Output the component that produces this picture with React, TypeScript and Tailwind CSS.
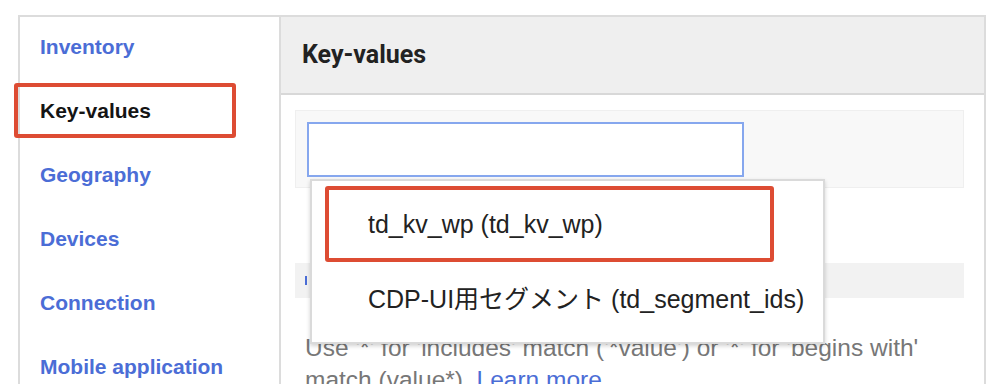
import type { FC } from "react"

const navItems = [
    { label: "Inventory", active: false },
    { label: "Key-values", active: true },
    { label: "Geography", active: false },
    { label: "Devices", active: false },
    { label: "Connection", active: false },
    { label: "Mobile application", active: false },
]

const NavItem: FC<{ label: string; active: boolean }> = ({ label, active }) => {
    return (
        <div className="relative flex h-[64px] items-center pl-[20px]">
            <span
                className={
                    active
                        ? "text-[21px] font-bold text-[#141414]"
                        : "text-[21px] font-bold text-[#4b6dd6]"
                }
            >
                {label}
            </span>
            {active && (
                <div className="absolute left-[-6px] top-[4px] h-[55px] w-[222px] rounded-[3px] border-[4px] border-[#dd4c33]" />
            )}
        </div>
    )
}

const Dropdown = () => {
    return (
        <div className="absolute left-[14px] top-[68px] z-10 h-[165px] w-[515px] border-2 border-[#dadada] bg-white shadow-[0_2px_4px_rgba(0,0,0,0.18)]">
            <div className="relative flex h-[84px] items-center pl-[56px] pt-[4px] text-[25px] text-[#222]">
                td_kv_wp (td_kv_wp)
                <div className="absolute left-[13px] top-[5px] h-[76px] w-[449px] rounded-[3px] border-[4px] border-[#dd4c33]" />
            </div>
            <div className="flex h-[72px] items-center pl-[56px] pb-[2px] text-[25px] text-[#222]">
                CDP-UI用セグメント (td_segment_ids)
            </div>
        </div>
    )
}

export default function App() {
    return (
        <div
            className="h-[384px] w-[990px] overflow-hidden bg-white pl-[18px] pt-[15px]"
            style={{ fontFamily: '"Liberation Sans", "Noto Sans CJK JP", Arial, sans-serif' }}
        >
            <div className="flex h-[400px] w-[968px] border-l-2 border-r-2 border-t-2 border-[#dcdcdc]">
                {/* left nav */}
                <div className="flex w-[261px] shrink-0 flex-col border-r-2 border-[#dcdcdc]">
                    <div className="-mt-[2px] flex flex-col">
                        {navItems.map((item) => (
                            <NavItem key={item.label} label={item.label} active={item.active} />
                        ))}
                    </div>
                </div>

                {/* right panel */}
                <div className="flex flex-1 flex-col">
                    <div className="flex h-[78px] items-center border-b-2 border-[#d8d8d8] bg-[#efefef] pl-[21px]">
                        <span
                            className="text-[25px] font-bold text-[#222]"
                            style={{ fontFamily: "Roboto, Arial, sans-serif" }}
                        >
                            Key-values
                        </span>
                    </div>

                    <div className="flex flex-col pl-[14px] pr-[20px]">
                        <div className="relative mt-[15px] h-[78px] border border-[#efefef] bg-[#f8f8f8] pl-[11px] pt-[11px]">
                            <div className="h-[55px] w-[437px] border-2 border-[#86a7ee] bg-white" />
                            <Dropdown />
                        </div>

                        <div className="mt-[75px] flex h-[35px] items-center bg-[#f2f2f2] pl-[10px]">
                            <span className="h-[9px] w-[2px] bg-[#4b6dd6]" />
                        </div>

                        <p className="mt-[34px] pl-[10px] text-[24.5px] leading-[32px] text-[#777]">
                            Use '*' for 'includes' match ('*value') or '*' for 'begins with'
                            <br />
                            match (value*). <span className="text-[#4b6dd6]">Learn more</span>
                        </p>
                    </div>
                </div>
            </div>
        </div>
    )
}
